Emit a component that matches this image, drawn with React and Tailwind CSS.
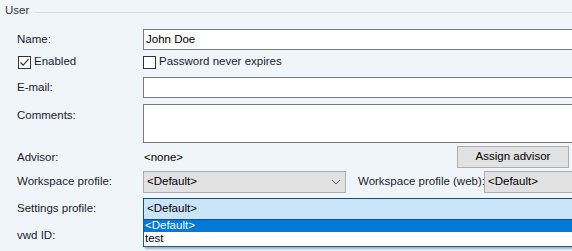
import React from 'react';

function Chevron() {
  return (
    <svg width="10" height="6" viewBox="0 0 10 6" className="shrink-0">
      <path d="M1 1 L5 5 L9 1" fill="none" stroke="#555" strokeWidth="1" />
    </svg>
  );
}

function Check({ checked }) {
  return (
    <span className="w-[13px] h-[13px] border border-[#333] bg-white flex items-center justify-center shrink-0">
      {checked && (
        <svg width="11" height="11" viewBox="0 0 11 11">
          <path d="M1.5 5.5 L4.2 8.2 L9.5 2.2" fill="none" stroke="#333" strokeWidth="1.2" />
        </svg>
      )}
    </span>
  );
}

export default function App() {
  const label = "w-[143px] shrink-0 pl-[17px] text-[#1b1b33] whitespace-nowrap";

  return (
    <div
      className="w-[572px] h-[251px] overflow-hidden bg-[#f0f5f9] text-[11.5px] text-black"
      style={{ fontFamily: '"Liberation Sans", Arial, sans-serif' }}
    >
      {/* Group header */}
      <div className="h-[20px] flex items-center pl-[5px] pt-[2px]">
        <span className="text-[#333]">User</span>
        <div className="flex-1 h-px bg-[#d9dde2] ml-[6px] mt-[3px]" />
      </div>

      {/* Name */}
      <div className="mt-[9px] h-[21px] flex items-center">
        <span className={label}>Name:</span>
        <div className="w-[440px] h-[21px] bg-white border border-[#7a7a7a] flex items-center pl-[2px] shrink-0">
          John Doe
        </div>
      </div>

      {/* Checkboxes */}
      <div className="mt-[5px] h-[14px] flex items-center">
        <div className="w-[143px] shrink-0 pl-[18px] flex items-center gap-[3px] text-[#1b1b33]">
          <Check checked />
          <span>Enabled</span>
        </div>
        <div className="flex items-center gap-[3px] text-[#1b1b33]">
          <Check />
          <span>Password never expires</span>
        </div>
      </div>

      {/* E-mail */}
      <div className="mt-[8px] h-[21px] flex items-center">
        <span className={label}>E-mail:</span>
        <div className="w-[440px] h-[21px] bg-white border border-[#7a7a7a] shrink-0" />
      </div>

      {/* Comments */}
      <div className="mt-[6px] h-[39px] flex items-start">
        <span className={label + " pt-[3px]"}>Comments:</span>
        <div className="w-[440px] h-[39px] bg-white border border-[#7a7a7a] shrink-0" />
      </div>

      {/* Advisor */}
      <div className="mt-[3px] h-[22px] flex items-center">
        <span className={label + " pt-[2px]"}>Advisor:</span>
        <span className="w-[314px] shrink-0 pl-[1px] pt-[2px]">&lt;none&gt;</span>
        <button className="w-[112px] h-[22px] bg-[#e1e1e1] border border-[#adadad] text-black shrink-0">
          Assign advisor
        </button>
      </div>

      {/* Workspace profile */}
      <div className="mt-[3px] h-[22px] flex items-center">
        <span className={label}>Workspace profile:</span>
        <div className="w-[203px] h-[22px] bg-[#e1e1e1] border border-[#adadad] flex items-center justify-between pl-[3px] pr-[4px] shrink-0">
          <span>&lt;Default&gt;</span>
          <Chevron />
        </div>
        <span className="ml-[12px] w-[126px] shrink-0 text-[#1b1b33] whitespace-nowrap">Workspace profile (web):</span>
        <div className="w-[200px] h-[22px] bg-[#e1e1e1] border border-[#adadad] flex items-center pl-[3px] shrink-0">
          &lt;Default&gt;
        </div>
      </div>

      {/* Settings profile */}
      <div className="mt-[5px] h-[22px] flex items-center">
        <span className={label}>Settings profile:</span>
        <div className="relative w-[440px] h-[22px] shrink-0">
          <div className="h-[22px] bg-[#cce4f7] border border-[#005499] flex items-center pl-[3px]">
            &lt;Default&gt;
          </div>
          <div className="absolute left-0 top-[22px] w-[440px] bg-white border border-[#0063b1] border-t-0 shadow-[2px_2px_2px_rgba(0,0,0,0.3)] z-10">
            <div className="h-[12px] bg-[#0078d7] text-white flex items-center pl-[1px] leading-none">&lt;Default&gt;</div>
            <div className="h-[14px] flex items-center pl-[1px] leading-none">test</div>
          </div>
        </div>
      </div>

      {/* vwd ID */}
      <div className="mt-[5px] h-[22px] flex items-center">
        <span className={label}>vwd ID:</span>
      </div>
    </div>
  );
}
